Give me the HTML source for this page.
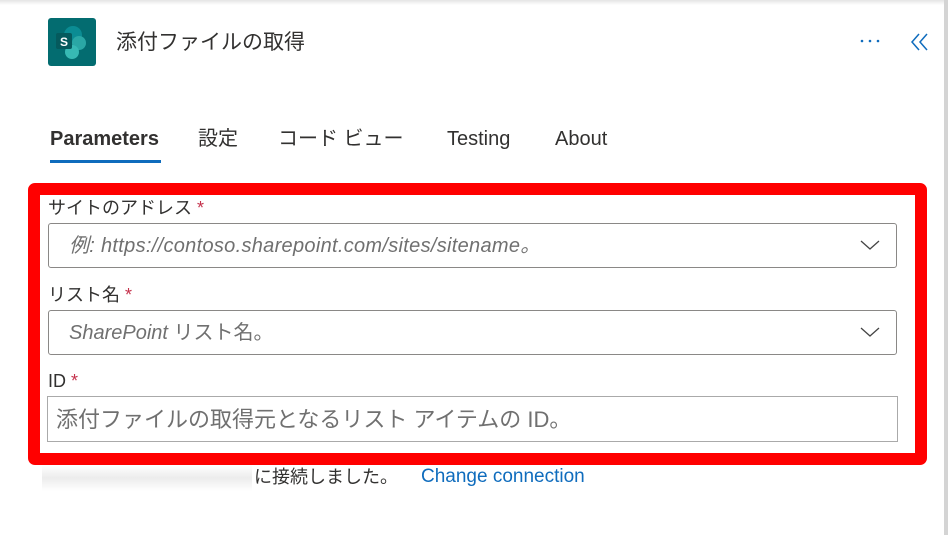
<!DOCTYPE html>
<html><head><meta charset="utf-8"><style>
*{margin:0;padding:0;box-sizing:border-box}
body{width:948px;height:535px;background:#fff;position:relative;overflow:hidden;font-family:"Liberation Sans","Noto Sans CJK JP",sans-serif;color:#323130}
.abs{position:absolute;white-space:nowrap}
.topsh{left:0;top:0;width:948px;height:5px;background:linear-gradient(#e4e4e4,#fff)}
.rbar{left:944px;top:0;width:4px;height:535px;background:#d4d4d4}
.logo{left:48px;top:18px;width:48px;height:48px;background:#036c70;border-radius:3px}
.title{left:116px;top:29px;font-size:21px;line-height:28px;color:#323130}
.tab{top:125px;font-size:20px;line-height:28px;color:#323130}
.ul{left:50px;top:160px;width:111px;height:3px;background:#0f6cbd}
.red{left:28px;top:183px;width:899px;height:282px;border:12px solid #ff0000;border-radius:7px}
.lbl{font-size:18px;line-height:24px;color:#323130}
.lbl b{color:#c4314b;font-weight:normal}
.inp{border:1px solid #8a8886;border-radius:3px;background:#fff}
.ph{font-size:20px;line-height:26px;color:#707070;font-style:italic}
.chev{right:16px;top:14px}
</style></head><body>
<div class="abs topsh"></div>
<div class="abs rbar"></div>
<div class="abs logo">
<svg width="48" height="48"><circle cx="25" cy="17" r="9" fill="#0b8c93"/><circle cx="31" cy="25" r="7" fill="#2aa7a5"/><circle cx="24" cy="34" r="7" fill="#37b9b4"/><rect x="8" y="15" width="16" height="16" rx="2" fill="#055a5d"/><text x="16" y="28" font-size="12" font-weight="bold" fill="#fff" text-anchor="middle" font-family="Liberation Sans">S</text></svg>
</div>
<div class="abs title">添付ファイルの取得</div>
<svg class="abs" style="left:860px;top:38px" width="20" height="6"><circle cx="2" cy="3" r="1.3" fill="#0f6cbd"/><circle cx="10" cy="3" r="1.3" fill="#0f6cbd"/><circle cx="18" cy="3" r="1.3" fill="#0f6cbd"/></svg>
<svg class="abs" style="left:910px;top:32px" width="22" height="20"><path d="M9 2 L2 10 L9 18 M17 2 L10 10 L17 18" fill="none" stroke="#0f6cbd" stroke-width="1.5"/></svg>
<div class="abs tab" style="left:50px;font-weight:600">Parameters</div>
<div class="abs tab" style="left:198px">設定</div>
<div class="abs tab" style="left:278px">コード ビュー</div>
<div class="abs tab" style="left:447px">Testing</div>
<div class="abs tab" style="left:555px">About</div>
<div class="abs ul"></div>
<div class="abs red"></div>
<div class="abs lbl" style="left:48px;top:196px">サイトのアドレス <b>*</b></div>
<div class="abs inp" style="left:48px;top:223px;width:849px;height:45px">
<div class="abs ph" style="left:20px;top:9px;letter-spacing:0.3px">例: https://contoso.sharepoint.com/sites/sitename。</div>
<svg class="abs chev" width="20" height="14"><path d="M1 3 L10 11 L19 3" fill="none" stroke="#444" stroke-width="1.3"/></svg></div>
<div class="abs lbl" style="left:48px;top:283px">リスト名 <b>*</b></div>
<div class="abs inp" style="left:48px;top:310px;width:849px;height:45px">
<div class="abs ph" style="left:20px;top:9px">SharePoint <span style="font-style:normal">リスト名。</span></div>
<svg class="abs chev" width="20" height="14"><path d="M1 3 L10 11 L19 3" fill="none" stroke="#444" stroke-width="1.3"/></svg></div>
<div class="abs lbl" style="left:48px;top:369px">ID <b>*</b></div>
<div class="abs" style="left:47px;top:396px;width:851px;height:46px;border:1px solid #aaa">
<div class="abs" style="left:8px;top:9px;font-size:22px;line-height:28px;color:#707070">添付ファイルの取得元となるリスト アイテムの ID。</div></div>
<div class="abs" style="left:42px;top:465px;width:210px;height:26px;background:linear-gradient(#fff,#ececec 50%,#fff)"></div>
<div class="abs" style="left:254px;top:464px;font-size:18px;line-height:26px;color:#323130">に接続しました。</div>
<div class="abs" style="left:421px;top:464px;font-size:19px;line-height:26px;color:#0f6cbd">Change connection</div>
</body></html>
